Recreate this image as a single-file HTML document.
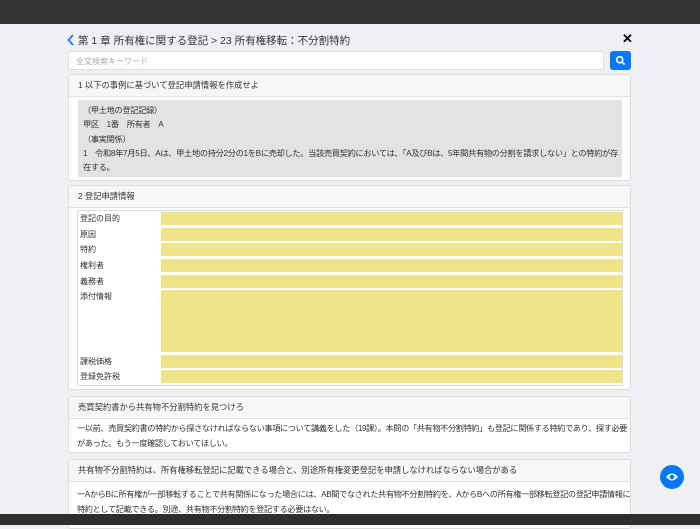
<!DOCTYPE html><html><head><meta charset="utf-8"><style>
*{box-sizing:border-box;margin:0;padding:0}
body{width:700px;height:525px;overflow:hidden;background:#efeff4;font-family:"Liberation Sans","Noto Sans CJK JP",sans-serif;color:#333;position:relative}
.top{position:absolute;left:0;top:0;width:700px;height:24px;background:#333}
.bot{position:absolute;left:0;top:514px;width:700px;height:11px;background:#2e2e2e}
.title{position:absolute;left:78px;top:33px;font-size:10.5px;color:#333}
.chev{position:absolute;left:67px;top:34px}
.x{position:absolute;left:622px;top:31px;font-size:13px;font-weight:bold;color:#000}
.search{position:absolute;left:68px;top:51px;width:536px;height:19px;background:#fff;border:1px solid #ddd;border-radius:3px;font-size:8px;color:#aaa;padding:4px 7px}
.sbtn{position:absolute;left:610px;top:51px;width:21px;height:19px;background:#0a78f5;border-radius:3px}
.card{position:absolute;left:68px;width:563px;background:#fff;border:1px solid #ddd;border-radius:3px;overflow:hidden}
.hd{background:#f7f7f7;border-bottom:1px solid #e2e2e2;font-size:8.3px;padding:0 9px;height:22px;line-height:21px;white-space:nowrap}
.gray{margin:3px 8px 0 9px;background:#e3e3e3;font-size:8.2px;line-height:14.3px;padding:4px 5px;height:77px;white-space:nowrap;letter-spacing:-0.3px}
.bd{font-size:8.2px;line-height:14.5px;padding:3px 8px;white-space:nowrap;letter-spacing:-0.38px}
.tbl{position:absolute;left:8px;top:24px;width:546px;height:176px;border:1px solid #ddd}
.r{position:absolute;left:2px;font-size:8px}
.y{position:absolute;left:83px;width:461px;background:#efe48a}
.eye{position:absolute;left:660px;top:465px;width:24px;height:24px;border-radius:12px;background:#0a78f5}
</style></head><body>
<div class="top"></div>
<svg class="chev" width="8" height="12"><path d="M6 1L1.5 6L6 11" fill="none" stroke="#1a7cf0" stroke-width="1.8"/></svg>
<div class="title">第 1 章 所有権に関する登記 &gt; 23 所有権移転：不分割特約</div>
<div class="x">✕</div>
<div class="search">全文検索キーワード</div>
<div class="sbtn"><svg width="21" height="19"><circle cx="9.7" cy="8.7" r="3" fill="none" stroke="#fff" stroke-width="1.6"/><path d="M12 11l2.5 2.5" stroke="#fff" stroke-width="1.8"/></svg></div>
<div class="card" style="top:74px;height:107px"><div class="hd">1 以下の事例に基づいて登記申請情報を作成せよ</div>
<div class="gray">（甲土地の登記記録）<br>甲区　1番　所有者　A<br>（事実関係）<br>1　令和8年7月5日、Aは、甲土地の持分2分の1をBに売却した。当該売買契約においては、「A及びBは、5年間共有物の分割を請求しない」との特約が存<br>在する。</div></div>
<div class="card" style="top:185px;height:205px"><div class="hd">2 登記申請情報</div>
<div class="tbl">
<div class="r" style="top:2px">登記の目的</div><div class="y" style="top:1px;height:13px"></div>
<div class="r" style="top:18px">原因</div><div class="y" style="top:17px;height:13px"></div>
<div class="r" style="top:33px">特約</div><div class="y" style="top:32px;height:13px"></div>
<div class="r" style="top:49px">権利者</div><div class="y" style="top:48px;height:13px"></div>
<div class="r" style="top:65px">義務者</div><div class="y" style="top:64px;height:13px"></div>
<div class="r" style="top:80px">添付情報</div><div class="y" style="top:79px;height:62px"></div>
<div class="r" style="top:145px">課税価格</div><div class="y" style="top:144px;height:13px"></div>
<div class="r" style="top:160px">登録免許税</div><div class="y" style="top:159px;height:13px"></div>
</div></div>
<div class="card" style="top:396px;height:57px"><div class="hd">売買契約書から共有物不分割特約を見つけろ</div>
<div class="bd">一以前、売買契約書の特約から探さなければならない事項について講義をした（19課）。本問の「共有物不分割特約」も登記に関係する特約であり、探す必要<br>があった。もう一度確認しておいてほしい。</div></div>
<div class="card" style="top:459px;height:70px"><div class="hd">共有物不分割特約は、所有権移転登記に記載できる場合と、別途所有権変更登記を申請しなければならない場合がある</div>
<div class="bd" style="padding-top:6px">一AからBに所有権が一部移転することで共有関係になった場合には、AB間でなされた共有物不分割特約を、AからBへの所有権一部移転登記の登記申請情報に<br>特約として記載できる。別途、共有物不分割特約を登記する必要はない。</div></div>
<div class="eye"><svg width="24" height="24"><path d="M6 12q6-7 12 0q-6 7-12 0z" fill="#fff"/><circle cx="12" cy="12" r="2.3" fill="#0a78f5"/></svg></div>
<div class="bot"></div>
</body></html>
